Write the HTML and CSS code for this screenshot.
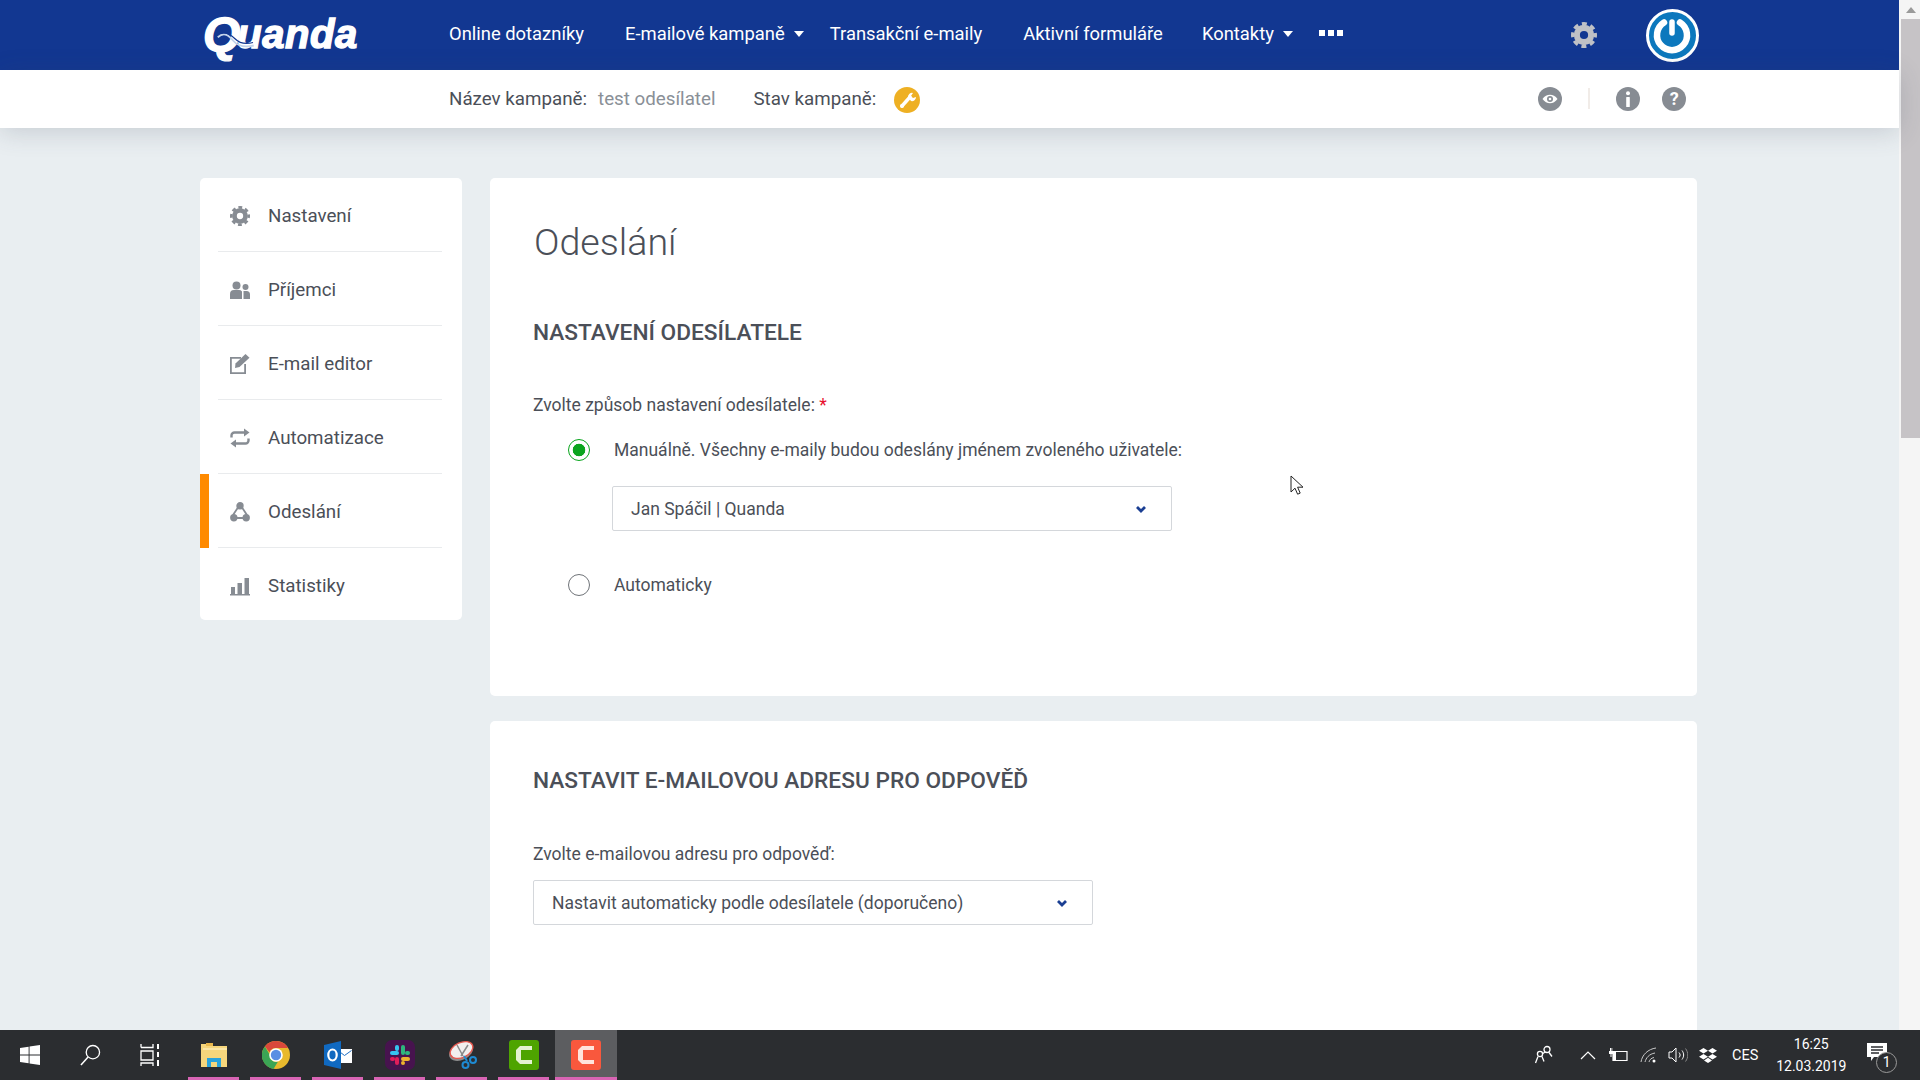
FILE: index.html
```html
<!DOCTYPE html>
<html lang="cs">
<head>
<meta charset="utf-8">
<title>Quanda</title>
<link rel="stylesheet" href="styles.css">
</head>
<body>
<svg class="defs" width="0" height="0" aria-hidden="true">
  <symbol id="gear" viewBox="0 0 24 24">
    <circle cx="12" cy="12" r="6.6" fill="none" stroke="currentColor" stroke-width="5.6"/>
    <circle cx="12" cy="12" r="10.4" fill="none" stroke="currentColor" stroke-width="3.2" stroke-dasharray="4.6 3.57" stroke-dashoffset="2.3"/>
  </symbol>
</svg>
<div class="screen">
  <div class="window">
    <div class="page">
      <header class="topbar">
        <a class="logo"><span class="logo-q">Q</span>uanda
          <svg class="logo-wave" viewBox="0 0 60 24"><path d="M3 7c9-8 15-2 21 5s14 9 27 6" fill="none" stroke="#c4d3ea" stroke-width="2.400"/><path d="M6 2c9-3 15 2 20 7s13 8 24 5" fill="none" stroke="#123791" stroke-width="1.600"/></svg>
        </a>
        <nav class="nav">
          <a class="nav-a">Online dotazníky</a>
          <a class="nav-b">E-mailové kampaně<i class="caret"></i></a>
          <a class="nav-c">Transakční e-maily</a>
          <a class="nav-d">Aktivní formuláře</a>
          <a class="nav-e">Kontakty<i class="caret"></i></a>
          <span class="dots"><i></i><i></i><i></i></span>
        </nav>
        <svg class="top-gear"><use href="#gear"/></svg>
        <span class="power">
          <svg viewBox="0 0 44 44" width="44" height="44"><path d="M14 9.500a15 15 0 1 0 16 0" fill="none" stroke="#fff" stroke-width="6.500" stroke-linecap="round"/><path d="M22 9v11" stroke="#fff" stroke-width="5.500" stroke-linecap="round"/></svg>
        </span>
      </header>
      <div class="subbar">
        <span class="sub-label">Název kampaně:</span>
        <span class="sub-value">test odesílatel</span>
        <span class="sub-label sub-state">Stav kampaně:</span>
        <span class="state-icon">
          <svg viewBox="0 0 26 26" width="26" height="26"><path d="M8 19l8-9" stroke="#fff" stroke-width="3.400" stroke-linecap="round"/><path d="M14 10a4 4 0 0 1 5-4l-2 3 2 2 3-1a4 4 0 0 1-5 4z" fill="#fff"/><circle cx="8" cy="19" r="2" fill="#fff"/></svg>
        </span>
        <span class="sub-tools">
          <span class="round-icon"><svg viewBox="0 0 24 24" width="24" height="24"><path d="M4.500 12c4-5.600 11-5.600 15 0-4 5.600-11 5.600-15 0z" fill="#fff"/><circle cx="12" cy="12" r="3" fill="#878c93"/><circle cx="12" cy="12" r="1.300" fill="#fff"/></svg></span>
          <span class="tool-sep"></span>
          <span class="round-icon round-i"><svg viewBox="0 0 24 24" width="24" height="24"><circle cx="12" cy="6.200" r="2" fill="#fff"/><rect x="10.200" y="10" width="3.600" height="10" rx=".6" fill="#fff"/></svg></span>
          <span class="round-icon round-q">?</span>
        </span>
      </div>
      <div class="content">
        <aside class="side">
          <a class="side-row"><svg class="side-ic"><use href="#gear"/></svg>Nastavení</a>
          <a class="side-row"><svg class="side-ic" viewBox="0 0 20 20"><circle cx="6.500" cy="5.500" r="4"/><circle cx="15.500" cy="7" r="3"/><path d="M0 19v-5a4 4 0 0 1 4-4h5a4 4 0 0 1 3 1.400V19zM13.500 19v-8h3a3.500 3.500 0 0 1 3.500 3.500V19z"/></svg>Příjemci</a>
          <a class="side-row"><svg class="side-ic" viewBox="0 0 20 20"><path d="M0 3h11v1.800H1.800v13.400h12.400V10H16v10H0z"/><path d="M5.500 9.500 15.500 0l4 3.800-10 9.200-4.500 1z"/></svg>E-mail editor</a>
          <a class="side-row"><svg class="side-ic" viewBox="0 0 20 20"><path d="M1.500 9.500V7.500a3 3 0 0 1 3-3H15M18.500 10.500v2a3 3 0 0 1-3 3H5" fill="none" stroke="currentColor" stroke-width="2.400"/><path d="M14 .5 19.500 4.500 14 8.500zM6 11.500.5 15.500 6 19.500z"/></svg>Automatizace</a>
          <a class="side-row side-active"><svg class="side-ic" viewBox="0 0 20 20" fill="none" stroke="currentColor" stroke-width="1.800"><circle cx="10" cy="3.800" r="2.800"/><circle cx="3.800" cy="15.800" r="2.800"/><circle cx="16.200" cy="15.800" r="2.800"/><path d="M7.800 5.800 3 13M12.200 5.800 17 13M6.600 16h6.800"/></svg>Odeslání</a>
          <a class="side-row"><svg class="side-ic" viewBox="0 0 20 20"><path d="M1 11h4v7H1zM7.500 7h4.500v11H7.500zM14.500 2H19v16h-4.500zM0 18h20v1.500H0z"/></svg>Statistiky</a>
        </aside>
        <main class="main">
          <section class="card card-first">
            <h1 class="title">Odeslání</h1>
            <h2 class="section section-one">NASTAVENÍ ODESÍLATELE</h2>
            <p class="label label-one">Zvolte způsob nastavení odesílatele: <span class="req">*</span></p>
            <div class="radio-row"><span class="radio radio-on"></span>Manuálně. Všechny e-maily budou odeslány jménem zvoleného uživatele:</div>
            <div class="select select-inner">Jan Spáčil | Quanda<svg class="chev" viewBox="0 0 12 8"><path d="M2 2l4 4 4-4" fill="none" stroke="#1b3f93" stroke-width="2.800"/></svg></div>
            <div class="radio-row radio-auto"><span class="radio"></span>Automaticky</div>
          </section>
          <section class="card card-second">
            <h2 class="section section-two">NASTAVIT E-MAILOVOU ADRESU PRO ODPOVĚĎ</h2>
            <p class="label label-two">Zvolte e-mailovou adresu pro odpověď:</p>
            <div class="select">Nastavit automaticky podle odesílatele (doporučeno)<svg class="chev" viewBox="0 0 12 8"><path d="M2 2l4 4 4-4" fill="none" stroke="#1b3f93" stroke-width="2.800"/></svg></div>
          </section>
        </main>
      </div>
    </div>
    <div class="scrollbar">
      <span class="scroll-up"></span>
      <span class="scroll-thumb"></span>
    </div>
    <svg class="cursor" viewBox="0 0 14 22" width="14" height="22"><path d="M1 1v16l4-3.800 2.600 6 2.600-1.100-2.600-5.900h5.400z" fill="#fff" stroke="#222" stroke-width="1"/></svg>
  </div>
  <footer class="taskbar">
    <span class="tb-sys">
      <svg viewBox="0 0 22 22" width="20" height="20"><path fill="#fff" d="M0 3.200 9.500 1.800v8.700H0zM10.500 1.700 22 0v10.500H10.500zM0 11.500h9.500v8.700L0 18.800zM10.500 11.500H22V22l-11.500-1.700z"/></svg>
    </span>
    <span class="tb-sys">
      <svg viewBox="0 0 22 24" width="21" height="23"><circle cx="13.500" cy="8.500" r="7" fill="none" stroke="#fff" stroke-width="1.400"/><path d="M8.500 13.500 1 22" stroke="#fff" stroke-width="1.600"/></svg>
    </span>
    <span class="tb-sys">
      <svg viewBox="0 0 20 24" width="20" height="24" fill="none" stroke="#fff" stroke-width="1.300"><path d="M1 4.500h12V1M1 4.500V1M1 8h12v9H1zM1 23v-3h12v3"/><path d="M18 1v5M18 9v5M18 17v6" stroke-width="2"/></svg>
    </span>
    <span class="tb-gap"></span>
    <span class="tb-app">
      <svg viewBox="0 0 28 28" width="28" height="28"><path fill="#f6d67c" d="M1 3h9l2 2h15v21H1z"/><path fill="#e9b84e" d="M6 2h7v3H6z"/><path fill="#fbe6a6" d="M3 7h24v2H3z"/><path fill="#2aa3dc" d="M7 17h14v9h-4v-5h-6v5H7z"/></svg>
    </span>
    <span class="tb-app">
      <svg viewBox="0 0 28 28" width="28" height="28"><circle cx="14" cy="14" r="14" fill="#e8b92d"/><path fill="#d9483b" d="M14 0a14 14 0 0 1 12.100 7H14a7 7 0 0 0-6.500 4.300L2.900 5.500A14 14 0 0 1 14 0z"/><path fill="#3ba555" d="M2.900 5.500l5 8.500a6.500 6.500 0 0 0 8 6.800L11.500 28A14 14 0 0 1 2.900 5.500z"/><circle cx="14" cy="14" r="6.800" fill="#fff"/><circle cx="14" cy="14" r="5.200" fill="#5a8fe3"/></svg>
    </span>
    <span class="tb-app">
      <svg viewBox="0 0 28 28" width="28" height="28"><path fill="#fff" d="M13 8h15v14H13z"/><path fill="none" stroke="#1f6fc4" d="M14 9.500l6.500 5 7-5"/><path fill="#1069c0" d="M0 4l17-4v28L0 24z"/><ellipse cx="8.500" cy="14" rx="4.200" ry="5.500" fill="none" stroke="#fff" stroke-width="2.200"/></svg>
    </span>
    <span class="tb-app">
      <svg viewBox="0 0 30 30" width="30" height="30"><rect width="30" height="30" rx="7" fill="#47134e"/><rect x="5" y="11" width="9" height="4" rx="2" fill="#36c5f0"/><rect x="10" y="5" width="4" height="6" rx="2" fill="#36c5f0"/><rect x="16" y="5" width="4" height="10" rx="2" fill="#2eb67d"/><rect x="20" y="11" width="5" height="4" rx="2" fill="#2eb67d"/><rect x="16" y="17" width="9" height="4" rx="2" fill="#ecb22e"/><rect x="16" y="21" width="4" height="4" rx="2" fill="#ecb22e"/><rect x="10" y="17" width="4" height="8" rx="2" fill="#e01e5a"/><rect x="5" y="17" width="5" height="4" rx="2" fill="#e01e5a"/></svg>
    </span>
    <span class="tb-app">
      <svg viewBox="0 0 30 30" width="30" height="30"><ellipse cx="14" cy="12" rx="12.500" ry="8" transform="rotate(-24 14 12)" fill="#8d8d8d"/><ellipse cx="14.500" cy="10" rx="12" ry="7.500" transform="rotate(-24 14.500 10)" fill="#f2efee" stroke="#e4574e" stroke-width="1.300"/><path d="M10 5l6 11M21 5l-7 11" stroke="#8a8a8a" stroke-width="1.500"/><path d="M17 16l3 5" stroke="#1e8ad2" stroke-width="2"/><circle cx="18.500" cy="25" r="3" fill="none" stroke="#1e8ad2" stroke-width="2"/><circle cx="26" cy="20" r="3" fill="none" stroke="#1e8ad2" stroke-width="2"/></svg>
    </span>
    <span class="tb-app">
      <svg viewBox="0 0 30 30" width="30" height="30"><rect width="30" height="30" rx="3" fill="#4ea400"/><path d="M23 6H11L7 10v10l4 4h12v-4H12V10h11z" fill="#e3f2d0"/></svg>
    </span>
    <span class="tb-app tb-current">
      <svg viewBox="0 0 30 30" width="30" height="30"><rect width="30" height="30" rx="3" fill="#f9583d"/><path d="M23 6H11L7 10v10l4 4h12v-4H12V10h11z" fill="#ffe4dc"/></svg>
    </span>
    <span class="tray">
      <svg class="tray-people" viewBox="0 0 20 20" width="20" height="20" fill="none" stroke="#fff" stroke-width="1.300"><circle cx="13" cy="4.500" r="3"/><circle cx="6" cy="9" r="2.600"/><path d="M1.500 18l2.500-6.500M8 11.500l2 5M9 8.500l2-1.500M15 7.500l3 4"/></svg>
      <svg class="tray-chev" viewBox="0 0 16 10" width="16" height="10" fill="none" stroke="#fff" stroke-width="1.200"><path d="M1 9l7-7 7 7"/></svg>
      <svg class="tray-bat" viewBox="0 0 20 14" width="20" height="14"><path fill="none" stroke="#fff" stroke-width="1.200" d="M5 3.500h14v9H5z"/><path fill="#fff" d="M5 3.500h3v9H5zM1 3h4v3H1zM2 0h1v3H2zM3.500 0h.800v3h-.800zM2.500 6h1v3h-1z"/></svg>
      <svg class="tray-wifi" viewBox="0 0 18 16" width="18" height="16" fill="none" stroke="#c8c8c8" stroke-width="1"><path d="M1 15C2 8 8 2 16 1M5 15c1-4 4-8 10-9M9 15c.5-2 2-4 5-4.500"/><circle cx="14" cy="14" r="1.500" fill="#fff" stroke="none"/></svg>
      <svg class="tray-vol" viewBox="0 0 20 16" width="20" height="16" fill="none" stroke="#fff" stroke-width="1"><path d="M1 5h3l4-4v14l-4-4H1z"/><path d="M11 5.500c1.500 2 1.500 3 0 5M14 3.500c2.200 3 2.200 6 0 9"/><path d="M17.500 1.500c3 4 3 9 0 13" stroke="#888"/></svg>
      <svg class="tray-drop" viewBox="0 0 18 16" width="18" height="16" fill="#fff"><path d="M4.500 1 9 3.800 4.500 6.600 0 3.800zM13.500 1 18 3.800l-4.500 2.800L9 3.800zM4.500 7 9 9.800l-4.500 2.800L0 9.800zM13.500 7 18 9.800l-4.500 2.800L9 9.800zM9 10.800l4 2.600-4 2.600-4-2.600z"/></svg>
      <span class="tray-lang">CES</span>
      <span class="clock"><span>16:25</span><span>12.03.2019</span></span>
      <span class="notify">
        <svg viewBox="0 0 20 18" width="20" height="18"><path fill="#fff" d="M0 0h20v14H7l-3 4v-4H0z"/><path stroke="#2b2d30" stroke-width="1.300" d="M4 4h12M4 7h12M4 10h8"/></svg>
        <span class="notify-badge">1</span>
      </span>
    </span>
  </footer>
</div>
</body>
</html>
```
FILE: styles.css
```css
* { box-sizing: border-box; }
html, body { margin: 0; height: 100%; overflow: hidden; }
body { font-family: Roboto, "Liberation Sans", sans-serif; color: #4b4f58; background: #e9eef1; }
a { color: inherit; text-decoration: none; }
.defs { position: absolute; }

.screen { display: flex; flex-direction: column; height: 1080px; }
.window { position: relative; display: flex; height: 1030px; overflow: hidden; }
.page { flex: 1; min-width: 0; display: flex; flex-direction: column; }

/* top bar */
.topbar { position: relative; height: 70px; flex: none; display: flex; align-items: center; background: #123791; color: #fff; padding-left: 203px; }
.logo { position: relative; display: block; width: 246px; height: 40px; font: italic 700 40px/40px "Liberation Sans", sans-serif; letter-spacing: .5px; -webkit-text-stroke: 1.4px #fff; margin-top: -6px; white-space: nowrap; }
.logo-q { display: inline-block; font-size: 48px; line-height: 40px; letter-spacing: -3px; transform: translateY(3px); }
.logo-wave { position: absolute; left: 11px; top: 20px; width: 48px; height: 18px; }
.nav { display: flex; align-items: center; font-size: 18.4px; font-weight: 400; margin-top: -4px; }
.nav a { display: flex; align-items: center; white-space: nowrap; }
.nav-a { margin-right: 41px; }
.nav-b { margin-right: 26px; }
.nav-c { margin-right: 41px; }
.nav-d { margin-right: 39px; }
.caret { width: 0; height: 0; border: 5px solid transparent; border-top: 6px solid #fff; border-bottom: 0; margin-left: 9px; margin-top: 2px; }
.dots { display: flex; gap: 3px; margin-left: 26px; }
.dots i { width: 6px; height: 6px; background: #fff; }
.top-gear { width: 26px; height: 26px; color: #bfc1c6; margin-left: 228px; }
.power { width: 53px; height: 53px; border-radius: 50%; border: 3px solid #fff; background: #0c78bd; display: flex; align-items: center; justify-content: center; margin-left: 49px; }

/* campaign bar */
.subbar { position: relative; z-index: 2; height: 58px; flex: none; display: flex; align-items: center; background: #fff; padding-left: 449px; padding-bottom: 1px; font-size: 18.75px; box-shadow: 0 4px 26px rgba(60, 70, 90, .2); }
.sub-label { color: #4b4f58; }
.sub-value { color: #8a9097; margin-left: 11px; }
.sub-state { margin-left: 38px; }
.state-icon { width: 26px; height: 26px; border-radius: 50%; background: #eeb023; margin-left: 18px; margin-top: 2px; display: flex; }
.sub-tools { display: flex; align-items: center; margin-left: 618px; }
.round-icon { width: 24px; height: 24px; border-radius: 50%; background: #878c93; display: flex; align-items: center; justify-content: center; color: #fff; }
.tool-sep { width: 2px; height: 21px; background: #f1ece8; margin: 0 26px; }
.round-q { font: 700 18px/24px Roboto, sans-serif; margin-left: 22px; }

/* layout */
.content { flex: 1; display: flex; align-items: flex-start; padding: 50px 0 0 200px; gap: 28px; min-height: 0; }
.side { width: 262px; flex: none; background: #fff; border-radius: 5px; overflow: hidden; }
.side-row { position: relative; display: flex; align-items: center; height: 74px; margin: 0 20px 0 18px; padding: 2px 0 0 12px; font-size: 18.75px; border-bottom: 1px solid #e9ebed; }
.side-row:last-child { border-bottom: 0; height: 72px; padding-top: 3px; }
.side-active::before { content: ""; position: absolute; left: -18px; top: 0; bottom: -1px; width: 9px; background: #ff8a00; }
.side-ic { width: 20px; height: 20px; flex: none; margin-right: 18px; color: #878c93; fill: #878c93; }

.main { width: 1207px; flex: none; display: flex; flex-direction: column; gap: 25px; }
.card { background: #fff; border-radius: 5px; padding-left: 43px; overflow: hidden; }
.card-first { height: 518px; padding-top: 39px; }
.card-second { height: 400px; padding-top: 47px; }
.title { margin: 0 0 0 1px; font-size: 37.6px; font-weight: 300; line-height: 50px; color: #4b4f58; }
.section { margin: 0; font-size: 22.7px; font-weight: 500; line-height: 26px; color: #4b4f58; }
.section-one { margin-top: 53px; }
.label { margin: 0; font-size: 17.5px; line-height: 22px; }
.label-one { margin-top: 48px; }
.label-two { margin-top: 49px; margin-bottom: 15px; }
.req { color: #e8112d; }
.radio-row { display: flex; align-items: center; height: 24px; margin: 22px 0 0 35px; font-size: 17.5px; }
.radio { width: 22px; height: 22px; flex: none; border-radius: 50%; border: 1px solid #6f7378; margin-right: 24px; background: #fff; }
.radio-on { border-color: #0aa51e; background: radial-gradient(circle, #0aa51e 0 6px, #fff 6.600px); }
.radio-auto { margin-top: 42px; }
.select { position: relative; display: flex; align-items: center; width: 560px; height: 45px; padding-left: 18px; font-size: 17.5px; border: 1px solid #d4d7db; border-radius: 2px; background: #fff; }
.select-inner { margin: 24px 0 0 79px; }
.chev { position: absolute; right: 24px; top: 18px; width: 12px; height: 8px; }

/* scrollbar */
.scrollbar { width: 21px; flex: none; display: flex; flex-direction: column; align-items: center; background: #f5f5f5; padding-left: 2px; }
.scroll-up { width: 0; height: 0; margin: 7px 0 6px; border: 5px solid transparent; border-bottom: 6px solid #9a9a9a; border-top: 0; }
.scroll-thumb { width: 100%; height: 419px; background: #c6c3c6; }
.cursor { position: absolute; left: 1290px; top: 475px; }

/* taskbar */
.taskbar { height: 50px; flex: none; display: flex; align-items: center; background: #2b2d30; color: #fff; }
.tb-sys { width: 60px; height: 50px; display: flex; align-items: center; justify-content: center; }
.tb-gap { width: 3px; }
.tb-app { position: relative; width: 62px; height: 50px; flex: none; display: flex; align-items: center; justify-content: center; }
.tb-app::after { content: ""; position: absolute; left: 5px; right: 6px; bottom: 0; height: 3px; background: #d864b4; }
.tb-current { background: #5c5d60; }
.tb-current::after { left: 0; right: 0; }
.tray { flex: 1; display: flex; align-items: center; height: 50px; padding-left: 917px; }
.tray-chev { margin-left: 26px; }
.tray-bat { margin-left: 12px; }
.tray-wifi { margin-left: 12px; }
.tray-vol { margin-left: 10px; }
.tray-drop { margin-left: 11px; }
.tray-lang { font-size: 14.5px; margin-left: 15px; }
.clock { display: flex; flex-direction: column; align-items: center; font-size: 14px; line-height: 22px; margin-left: 18px; width: 70px; }
.notify { position: relative; display: flex; margin-left: 21px; margin-top: -6px; }
.notify-badge { position: absolute; left: 9px; top: 9px; width: 21px; height: 21px; border-radius: 50%; border: 1px solid #9a9a9a; background: #2b2d30; font-size: 14px; line-height: 19px; text-align: center; }
```
